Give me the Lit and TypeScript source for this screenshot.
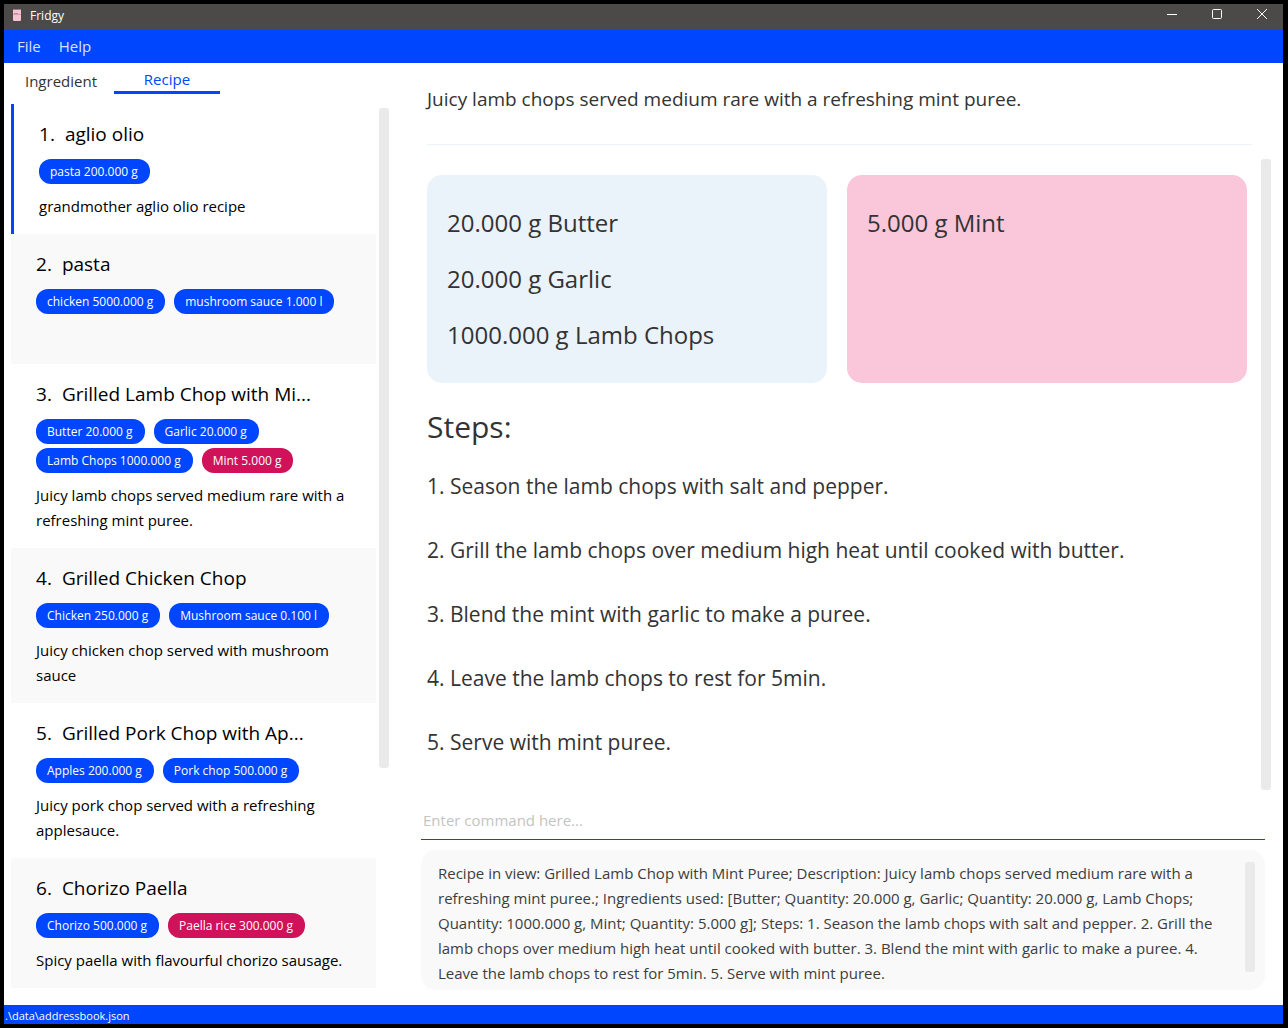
import { LitElement, html, css, nothing } from "lit";
import { customElement, property, state } from "lit/decorators.js";
import { classMap } from "lit/directives/class-map.js";

interface Ingredient {
  name: string;
  quantity: string;
  missing?: boolean;
}

interface Recipe {
  name: string;
  ingredients: Ingredient[];
  description: string;
}

const MAX_NAME_LENGTH = 25;

const RECIPES: Recipe[] = [
  {
    name: "aglio olio",
    ingredients: [{ name: "pasta", quantity: "200.000 g" }],
    description: "grandmother aglio olio recipe",
  },
  {
    name: "pasta",
    ingredients: [
      { name: "chicken", quantity: "5000.000 g" },
      { name: "mushroom sauce", quantity: "1.000 l" },
    ],
    description: "",
  },
  {
    name: "Grilled Lamb Chop with Mint Puree",
    ingredients: [
      { name: "Butter", quantity: "20.000 g" },
      { name: "Garlic", quantity: "20.000 g" },
      { name: "Lamb Chops", quantity: "1000.000 g" },
      { name: "Mint", quantity: "5.000 g", missing: true },
    ],
    description: "Juicy lamb chops served medium rare with a refreshing mint puree.",
  },
  {
    name: "Grilled Chicken Chop",
    ingredients: [
      { name: "Chicken", quantity: "250.000 g" },
      { name: "Mushroom sauce", quantity: "0.100 l" },
    ],
    description: "Juicy chicken chop served with mushroom sauce",
  },
  {
    name: "Grilled Pork Chop with Applesauce",
    ingredients: [
      { name: "Apples", quantity: "200.000 g" },
      { name: "Pork chop", quantity: "500.000 g" },
    ],
    description: "Juicy pork chop served with a refreshing applesauce.",
  },
  {
    name: "Chorizo Paella",
    ingredients: [
      { name: "Chorizo", quantity: "500.000 g" },
      { name: "Paella rice", quantity: "300.000 g", missing: true },
    ],
    description: "Spicy paella with flavourful chorizo sausage.",
  },
];

const STEPS = [
  "Season the lamb chops with salt and pepper.",
  "Grill the lamb chops over medium high heat until cooked with butter.",
  "Blend the mint with garlic to make a puree.",
  "Leave the lamb chops to rest for 5min.",
  "Serve with mint puree.",
];

const RESULT =
  "Recipe in view: Grilled Lamb Chop with Mint Puree; Description: Juicy lamb chops served medium rare with a refreshing mint puree.; Ingredients used: [Butter; Quantity: 20.000 g, Garlic; Quantity: 20.000 g, Lamb Chops; Quantity: 1000.000 g, Mint; Quantity: 5.000 g]; Steps: 1. Season the lamb chops with salt and pepper. 2. Grill the lamb chops over medium high heat until cooked with butter. 3. Blend the mint with garlic to make a puree. 4. Leave the lamb chops to rest for 5min. 5. Serve with mint puree.";

/** Shortens a long recipe name so that it stays on one line of its card. */
const shorten = (name: string) =>
  name.length > MAX_NAME_LENGTH ? `${name.slice(0, MAX_NAME_LENGTH).trimEnd()}...` : name;

@customElement("recipe-card")
export class RecipeCard extends LitElement {
  @property({ attribute: false }) recipe!: Recipe;
  @property({ type: Number }) index = 1;

  static styles = css`
    :host {
      display: block;
      box-sizing: border-box;
      min-height: 130px;
      padding: 15px 25px;
      color: #000;
    }
    .title {
      display: flex;
      gap: 10px;
      margin: 0;
      font-size: 19px;
      font-weight: 400;
      line-height: 30px;
    }
    .tags {
      display: flex;
      flex-wrap: wrap;
      gap: 4px 9px;
      margin: 10px 0;
      padding: 0;
      list-style: none;
    }
    .tag {
      padding: 0 12px 0 11px;
      border-radius: 12px;
      background: #0046ff;
      color: #fff;
      font-size: 12px;
      line-height: 25px;
    }
    .missing {
      background: #d0125a;
    }
    .description {
      margin: 0;
      font-size: 15px;
      line-height: 25px;
    }
  `;

  render() {
    const { name, ingredients, description } = this.recipe;
    return html`
      <h3 class="title"><span>${this.index}.</span><span>${shorten(name)}</span></h3>
      <ul class="tags">
        ${ingredients.map(
          (i) => html`<li class=${classMap({ tag: true, missing: !!i.missing })}>${i.name} ${i.quantity}</li>`
        )}
      </ul>
      ${description ? html`<p class="description">${description}</p>` : nothing}
    `;
  }
}

@customElement("app-root")
export class AppRoot extends LitElement {
  @state() private tab = "Recipe";
  @state() private selected = 0;

  static styles = css`
    :host {
      display: flex;
      flex-direction: column;
      box-sizing: border-box;
      min-height: 100vh;
      border: 4px solid #000;
      border-right-width: 5px;
      background: #fff;
      color: #333;
      font-family: "Open Sans", "Noto Sans", sans-serif;
    }
    button {
      border: 0;
      padding: 0;
      background: none;
      color: inherit;
      font: inherit;
      cursor: pointer;
    }
    .titlebar {
      display: flex;
      align-items: center;
      height: 26px;
      padding: 0 16px 4px 9px;
      box-sizing: border-box;
      background: #4b4a48;
      color: #fff;
      font-size: 12px;
    }
    .logo {
      display: block;
      margin-right: 9px;
    }
    .controls {
      display: flex;
      gap: 35px;
      margin-left: auto;
      padding-bottom: 2px;
    }
    .controls svg {
      display: block;
    }
    .menubar {
      display: flex;
      gap: 18px;
      padding: 0 13px;
      background: #0046ff;
      color: #d9e3ff;
      font-size: 15px;
      line-height: 33px;
    }
    .body {
      display: grid;
      grid-template-columns: 385px 1fr;
      flex: 1;
    }
    .sidebar {
      display: flex;
      flex-direction: column;
      padding-bottom: 17px;
    }
    .tabs {
      display: flex;
      height: 41px;
      padding-left: 4px;
      box-sizing: border-box;
    }
    .tab {
      width: 106px;
      height: 31px;
      padding-top: 6px;
      font-size: 15px;
      line-height: 25px;
    }
    .tab.active {
      padding-top: 4px;
      border-bottom: 3px solid #0046ff;
      color: #0046ff;
    }
    .scroller {
      display: flex;
      flex: 1;
      gap: 3px;
      padding-left: 7px;
    }
    .list {
      flex: 1;
      min-width: 0;
      margin: 0;
      padding: 0;
      list-style: none;
    }
    .item:nth-child(even) {
      background: #f9f9f9;
    }
    .item.selected {
      border-left: 3px solid #0046ff;
      background: #fff;
    }
    .track {
      display: flex;
      flex-direction: column;
      width: 10px;
      padding-top: 4px;
    }
    .track::after {
      content: "";
      flex: 1;
    }
    .thumb {
      flex: 3;
      border-radius: 3px;
      background: #eaeaea;
    }
    .main {
      display: flex;
      flex-direction: column;
      min-width: 0;
      padding: 22px 12px 15px 32px;
    }
    .summary {
      margin: 0 19px 0 6px;
      padding-bottom: 31px;
      border-bottom: 1px solid #eaf2fa;
      font-size: 19px;
      line-height: 28px;
    }
    .detail {
      display: flex;
      flex: 1;
      gap: 14px;
      padding: 14px 0 12px 6px;
    }
    .content {
      flex: 1;
      padding-top: 16px;
    }
    .content + .thumb {
      flex: 0 0 10px;
    }
    .panels {
      display: grid;
      grid-template-columns: 1fr 1fr;
      gap: 20px;
    }
    .panel {
      margin: 0;
      padding: 20px;
      border-radius: 15px;
      background: #eaf2fa;
      font-size: 24px;
      line-height: 56px;
      list-style: none;
    }
    .panel.missing {
      background: #fac7da;
    }
    .heading {
      margin: 22px 0 5px;
      font-size: 30px;
      font-weight: 400;
      line-height: 44px;
    }
    .steps {
      margin: 0;
      padding: 0;
      list-style: none;
      font-size: 21px;
      line-height: 64px;
    }
    .command {
      height: 38px;
      margin: 0 6px 10px 0;
      padding: 0 2px 2px;
      box-sizing: border-box;
      border: 0;
      border-bottom: 1px solid #0046ff;
      outline: 0;
      background: none;
      color: #333;
      font: inherit;
      font-size: 15px;
    }
    .command::placeholder {
      color: #c4c4c4;
    }
    .result {
      display: flex;
      gap: 10px;
      margin-right: 6px;
      padding: 11px 10px 4px 17px;
      border-radius: 15px;
      background: #f9f9f9;
      color: #3d3d3d;
    }
    .message {
      flex: 1;
      margin: 0;
      font-size: 15px;
      line-height: 25px;
    }
    .result .thumb {
      flex: 0 0 10px;
      margin: 1px 0 14px;
    }
    .status {
      padding-top: 3px;
      padding-left: 1px;
      background: #0046ff;
      color: #fff;
      font-size: 11px;
      line-height: 16px;
    }
  `;

  render() {
    const current = RECIPES[2];
    const available = current.ingredients.filter((i) => !i.missing);
    const missing = current.ingredients.filter((i) => i.missing);
    return html`
      <header class="titlebar">
        <svg class="logo" width="8" height="12" viewBox="0 0 8 12" aria-hidden="true">
          <rect width="8" height="12" rx="1" fill="#f6c3d0" />
          <path d="M0 5.500h8" stroke="#d3a0ad" />
          <path d="M1 4.500h4" stroke="#b98a96" />
          <path d="M0 .5h8" stroke="#9b7780" />
        </svg>
        <span>Fridgy</span>
        <div class="controls">
          <button aria-label="Minimize">
            <svg width="10" height="10" viewBox="0 0 10 10"><path d="M0 5.500h10" stroke="#fff" /></svg>
          </button>
          <button aria-label="Maximize">
            <svg width="10" height="10" viewBox="0 0 10 10">
              <rect x=".5" y=".5" width="9" height="9" rx="1" fill="none" stroke="#fff" />
            </svg>
          </button>
          <button aria-label="Close">
            <svg width="10" height="10" viewBox="0 0 10 10"><path d="M0 0l10 10M10 0L0 10" stroke="#fff" /></svg>
          </button>
        </div>
      </header>
      <nav class="menubar">
        <button>File</button>
        <button>Help</button>
      </nav>
      <div class="body">
        <aside class="sidebar">
          <div class="tabs" role="tablist">
            ${["Ingredient", "Recipe"].map(
              (t) => html`<button
                role="tab"
                aria-selected=${this.tab === t}
                class=${classMap({ tab: true, active: this.tab === t })}
                @click=${() => (this.tab = t)}
              >${t}</button>`
            )}
          </div>
          <div class="scroller">
            <ul class="list">
              ${RECIPES.map(
                (r, i) => html`<li
                  class=${classMap({ item: true, selected: i === this.selected })}
                  @click=${() => (this.selected = i)}
                ><recipe-card .recipe=${r} .index=${i + 1}></recipe-card></li>`
              )}
            </ul>
            <div class="track"><div class="thumb"></div></div>
          </div>
        </aside>
        <main class="main">
          <p class="summary">${current.description}</p>
          <div class="detail">
            <div class="content">
              <div class="panels">
                <ul class="panel">
                  ${available.map((i) => html`<li>${i.quantity} ${i.name}</li>`)}
                </ul>
                <ul class="panel missing">
                  ${missing.map((i) => html`<li>${i.quantity} ${i.name}</li>`)}
                </ul>
              </div>
              <h2 class="heading">Steps:</h2>
              <ol class="steps">
                ${STEPS.map((s, i) => html`<li>${i + 1}. ${s}</li>`)}
              </ol>
            </div>
            <div class="thumb"></div>
          </div>
          <input class="command" type="text" aria-label="Command" placeholder="Enter command here..." />
          <div class="result">
            <p class="message">${RESULT}</p>
            <div class="thumb"></div>
          </div>
        </main>
      </div>
      <footer class="status">.\\data\\addressbook.json</footer>
    `;
  }
}
